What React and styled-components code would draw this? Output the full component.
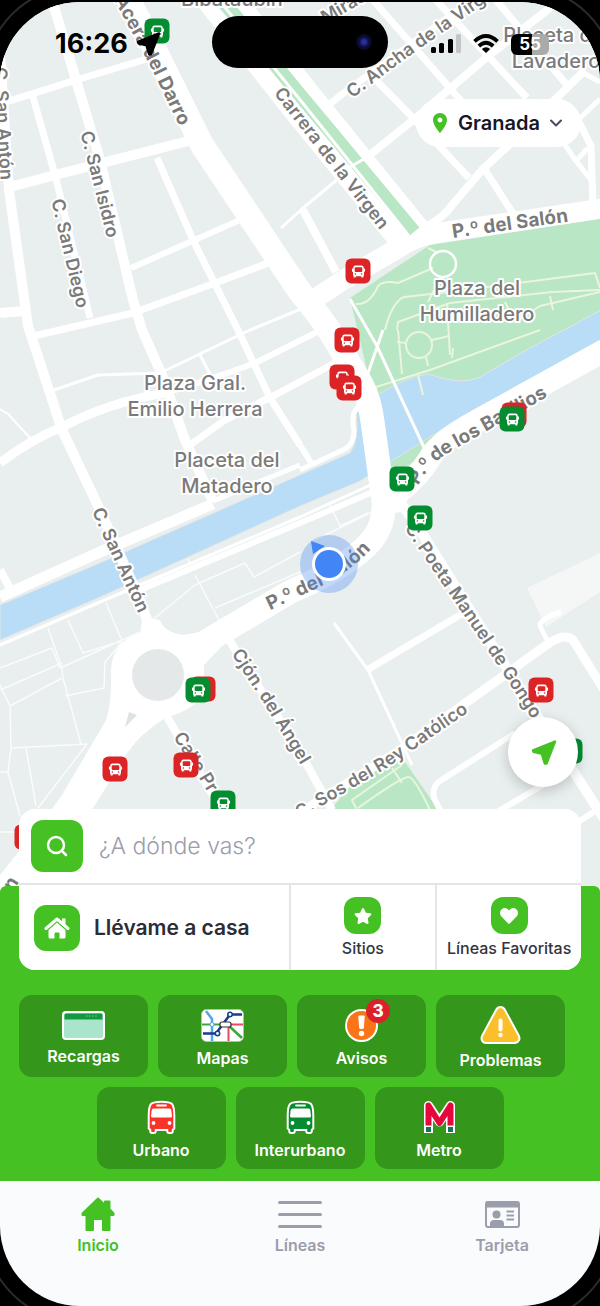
import styled, { createGlobalStyle } from "styled-components"
import { FaHeart, FaStar } from "react-icons/fa"
import { MdLocationOn } from "react-icons/md"
import { ChevronDown, Search } from "lucide-react"


const colors = {
    green: '#45c124',
    tile: '#34961b',
    busGreen: '#048c31',
    busRed: '#dc2325',
    land: '#e9eeee',
    park: '#b9e6c4',
    water: '#b9dcf7',
    label: '#7a7a7a',
    gray: '#9a9dab'
}

const mapWidth = 600
const mapHeight = 890

const roads = [
    // barrio de San Anton
    { w: 10, d: 'M0 55 L9 190 L28 326 L62 430 L100 510 L140 600 L156 645' },
    { w: 10, d: 'M52 0 L76 80 L100 160 L133 300 L142 330 L162 375 L185 440 L213 502' },
    { w: 7, d: 'M33 97 L55 175 L90 318' },
    { w: 7, d: 'M0 104 L76 80 L150 58' },
    { w: 10, d: 'M10 187 L55 175 L200 138' },
    { w: 7, d: 'M157 158 L193 240 L238 330 L270 398 L300 445' },
    { w: 6, d: 'M131 268 L240 220' },
    { w: 7, d: 'M34 336 L133 313 L215 283 L274 261' },
    { w: 10, d: 'M0 313 L24 311' },
    { w: 3, d: 'M54 390 L98 375 L160 373 L250 330 L318 302' },
    { w: 9, d: 'M0 463 Q30 440 62 427 Q110 402 165 393' },
    { w: 6, d: 'M165 393 Q210 380 255 363 L325 328' },
    { w: 7, d: 'M190 445 L225 420 L275 395 L350 355' },
    { w: 3, d: 'M200 355 L210 374' },
    { w: 2, d: 'M0 409 L8 414 L31 439' },
    { w: 8, d: 'M0 570 L12 592' },
    { w: 3, d: 'M281 228 L303 208 L357 163' },
    { w: 8, d: 'M303 210 L336 272' },
    // centro
    { w: 7, d: 'M322 110 L345 92 L478 -4' },
    { w: 8, d: 'M366 158 L417 117 L487 57 L560 0' },
    { w: 7, d: 'M373 0 L462 102' },
    { w: 7, d: 'M372 76 L415 120 L469 178' },
    { w: 7, d: 'M436 0 L527 98' },
    { w: 7, d: 'M496 0 L566 84' },
    { w: 7, d: 'M340 0 L348 12' },
    { w: 8, d: 'M428 226 Q445 216 453 204 L482 170 L512 142 L585 70' },
    { w: 7, d: 'M485 170 L514 215' },
    { w: 7, d: 'M578 120 L591 146 L593 206' },
    { w: 5, d: 'M565 145 L576 161 L588 148 M576 161 L591 180' },
    { w: 5, d: 'M600 99 L580 118 L562 145' },
    { w: 5, d: 'M585 74 L600 82' },
    // riberas del Genil
    { w: 11, d: 'M0 597 L100 552 L213 504' },
    { w: 5, d: 'M213 501 L300 465' },
    { w: 5, d: 'M300 470 L345 449 Q354 444 354 430 Q350 412 360 406' },
    { w: 6, d: 'M300 445 L313 466' },
    { w: 3, d: 'M0 645 L100 602 L300 517 L375 483' },
    { w: 6, d: 'M140 590 L300 523 L375 491' },
    // sur
    { w: 8, d: 'M226 635 L300 752 L332 810' },
    { w: 8, d: 'M166 715 L219 806' },
    { w: 9, d: 'M285 822 L400 750 L545 646 Q564 632 573 640 L604 690' },
    { w: 10, d: 'M395 495 L420 530 L470 610 L540 720 L605 820' },
    { w: 7, d: 'M367 670 L465 612' },
    { w: 3, d: 'M334 623 L368 670 L412 765' },
    { w: 5, d: 'M561 612 Q536 620 541 628 L548 642' },
    { w: 6, d: 'M441 812 L434 798 Q432 786 440 781 L515 733' },
    { w: 6, d: 'M497 812 L555 778 M578 822 L600 808' }
]

const mainRoads = [
    { w: 24, d: 'M124 -8 L150 40 L202 145 L300 292 Q322 318 334 338 L362 385 Q370 400 373 425 L382 490 Q388 520 372 540 Q350 566 290 592 L200 645 L165 660' },
    { w: 20, d: 'M605 208 L438 233 Q415 237 400 247 L345 279 L316 298' },
    { w: 23, d: 'M388 500 Q415 482 430 458 Q438 442 475 422 L605 350' }
]

const lots = [
    'M0 668 L52 648 L60 668 L140 632 M48 628 L62 668 L63 678 L81 744 M68 620 L83 653 L122 641 L106 603 M0 690 L62 663',
    'M62 678 L10 706 L0 685 M10 706 L11 748 L87 744 L38 808 M11 748 L8 772 L20 816 M0 772 L8 772 M26 748 L36 806',
    'M65 696 L104 688 L105 662 L122 642 M140 630 L195 585 L245 563 L254 577 L300 552 M195 575 L220 622 M215 608 L300 572',
    'M330 505 L340 526 L368 513 M0 832 L20 832 M315 540 L372 512 M190 565 L188 558'
]

const parkPaths = [
    'M356 304 Q370 305 378 286 Q384 280 398 283 L433 268 M428 248 L436 252 M418 375 L423 395 M453 348 L452 358 M434 290 L428 302',
    'M385 330 Q392 302 404 297 L440 293 L595 273 L600 288 M397 330 L398 322 L450 303 L552 292 L600 290 M550 296 L553 310',
    'M376 387 L430 370 L540 330 M447 303 L450 355 M398 330 L402 374 M505 302 L515 322 L540 306 L600 292 M397 342 L406 343 M432 340 L449 336 M426 357 L428 366'
]

const streetLabels = [
    { id: 'darro', bold: true, text: 'Acera del Darro', d: 'M120 -4 L155 60 L205 162' },
    { id: 'anton-norte', text: 'C. San Antón', d: 'M1 67 L9 205' },
    { id: 'isidro', text: 'C. San Isidro', d: 'M87 131 L120 260' },
    { id: 'diego', text: 'C. San Diego', d: 'M58 199 L88 325' },
    { id: 'virgen', text: 'Carrera de la Virgen', d: 'M279 89 L402 247' },
    { id: 'ancha', text: 'C. Ancha de la Virgen', d: 'M348 93 L400 54 L520 -30' },
    { id: 'miras', text: 'Miras', d: 'M322 18 L370 -10' },
    { id: 'salon', bold: true, text: 'P.º del Salón', d: 'M452 231 L600 210' },
    { id: 'basilios', bold: true, text: 'P.º de los Basilios', d: 'M412 482 Q424 458 448 445 L580 370' },
    { id: 'salon-sur', bold: true, text: 'P.º del Salón', d: 'M267 604 L322 578 Q352 562 374 535 L385 515' },
    { id: 'anton', text: 'C. San Antón', d: 'M98 508 L124 565 L156 635' },
    { id: 'poeta', text: 'C. Poeta Manuel de Gongo', d: 'M410 524 L440 568 L500 656 L570 765' },
    { id: 'angel', text: 'Cjón. del Ángel', d: 'M237 650 L270 700 L315 775' },
    { id: 'princesa', text: 'Calle Pr', d: 'M179 733 L205 774 L250 850' },
    { id: 'catolico', text: 'C. Sos del Rey Católico', d: 'M296 813 L380 764 L500 682' },
    { id: 'camino', bold: true, text: 'n', d: 'M7 888 L20 868' }
]

const placeLabels = [
    { x: 477, y: 295, lines: ['Plaza del', 'Humilladero'] },
    { x: 195, y: 390, lines: ['Plaza Gral.', 'Emilio Herrera'] },
    { x: 227, y: 467, lines: ['Placeta del', 'Matadero'] },
    { x: 556, y: 42, lines: ['Placeta del', 'Lavadero'] },
    { x: 232, y: 6, lines: ['Bibataubín'] }
]

const stops = [
    { x: 157, y: 31, green: true },
    { x: 358, y: 271 },
    { x: 347, y: 340 },
    { x: 342, y: 377 },
    { x: 349, y: 388 },
    { x: 514, y: 415 },
    { x: 512, y: 419, green: true },
    { x: 402, y: 479, green: true },
    { x: 420, y: 518, green: true },
    { x: 203, y: 689 },
    { x: 198, y: 690, green: true },
    { x: 541, y: 690 },
    { x: 115, y: 769 },
    { x: 186, y: 765 },
    { x: 223, y: 803, green: true },
    { x: 27, y: 837 },
    { x: 570, y: 751, green: true }
]


const StopIcon = () => (
    <svg width="14" height="14" viewBox="0 0 14 14" aria-hidden="true">
        <path fill="white" fillRule="evenodd" d="M4 1h6c1.300 0 2 .7 2.200 2l.1 1h.7c.4 0 .6.3.6.6v2c0 .4-.2.6-.6.6h-.5v3.300c0 .5-.2.8-.6 1v1c0 .4-.3.6-.7.6h-.7c-.4 0-.7-.2-.7-.6v-.8H4.200v.8c0 .4-.3.6-.7.6h-.7c-.4 0-.7-.2-.7-.6v-1c-.4-.2-.6-.5-.6-1V7.200H1c-.4 0-.6-.2-.6-.6v-2c0-.3.2-.6.6-.6h.7l.1-1C2 1.700 2.700 1 4 1zM4.100 2.700c-.6 0-.9.3-.9.9v2.900c0 .6.3.9.9.9h5.800c.6 0 .9-.3.9-.9V3.600c0-.6-.3-.9-.9-.9zM3.900 8.700a.8.8 0 100 1.600.8.8 0 000-1.600zm6.200 0a.8.8 0 100 1.600.8.8 0 000-1.600z" />
    </svg>
)

const ArrowIcon = ({ size, color }) => (
    <svg width={size} height={size} viewBox="0 0 26 26" aria-hidden="true">
        <path d="M24 2.500 L3 11 L3.500 12.300 L11.500 14.300 L14.300 23.500 L15.800 23.500 Z" fill={color} stroke={color} strokeWidth="2.500" strokeLinejoin="round" />
    </svg>
)

const SignalIcon = () => (
    <svg width="30" height="20" viewBox="0 0 30 20" aria-hidden="true">
        <rect x="0" y="13" width="5" height="6" rx="1.500" />
        <rect x="8" y="9" width="5" height="10" rx="1.500" />
        <rect x="17" y="5" width="5" height="14" rx="1.500" />
        <rect x="25" y="0" width="5" height="19" rx="1.500" fill="#c3c6c6" />
    </svg>
)

const WifiIcon = () => (
    <svg width="26" height="20" viewBox="0 0 26 20" fill="none" stroke="black" strokeWidth="3.800" aria-hidden="true">
        <path d="M1.500 7.300 Q13 -3.200 24.500 7.300" />
        <path d="M5.800 12 Q13 5.400 20.200 12" />
        <path d="M13 19 L8.800 15 Q13 11.600 17.200 15 Z" fill="black" stroke="none" />
    </svg>
)

const HouseIcon = () => (
    <svg width="26" height="22" viewBox="0 0 26 22" fill="white" aria-hidden="true">
        <path d="M2 11.500 L13 2 L24 11.500" fill="none" stroke="white" strokeWidth="3" strokeLinecap="round" strokeLinejoin="round" />
        <path d="M18 1.500h3.500v7L18 5.500z" />
        <path d="M13 5.500 L21.500 13v7q0 1.500-1.500 1.500h-4.500v-5q0-1-1-1h-3q-1 0-1 1v5H6q-1.500 0-1.500-1.500v-7z" />
    </svg>
)

const CardIcon = () => (
    <svg width="43" height="29" viewBox="0 0 43 29" aria-hidden="true">
        <rect x="1" y="1" width="41" height="27" rx="3" fill="#a9e5cb" stroke="white" strokeWidth="2" />
        <path d="M2.500 8.500V4q0-1.500 1.500-1.500h35q1.500 0 1.500 1.500v4.500z" fill="#119a41" />
        <path d="M24 5h11" stroke="#5fc184" strokeWidth="1" strokeDasharray="2 1" />
    </svg>
)

const NetworkIcon = () => (
    <svg width="43" height="33" viewBox="0 0 43 33" fill="none" strokeWidth="2" aria-hidden="true">
        <rect x=".5" y=".5" width="42" height="32" rx="5" fill="white" stroke="#b5c0b5" strokeWidth="1" />
        <path d="M5 2 L11 10 V32" stroke="#55a4ec" strokeWidth="2.500" />
        <path d="M1 15.500 H20" stroke="#38a83a" />
        <path d="M28 15.500 H42 M27.500 17 V32" stroke="#e64b62" />
        <path d="M28 17 L41 29" stroke="#38a83a" strokeWidth="2.500" />
        <path d="M2 24.500 H15 L29 5.500 H41" stroke="#153d8c" strokeWidth="2.500" />
        <circle cx="11" cy="15.500" r="2" fill="white" stroke="#55a4ec" strokeWidth="1" />
        <circle cx="16.500" cy="24.500" r="2.200" fill="white" stroke="#153d8c" strokeWidth="1.500" />
        <circle cx="29" cy="5.500" r="2.200" fill="white" stroke="#153d8c" strokeWidth="1.500" />
        <rect x="19" y="13" width="11" height="5" rx="2" fill="white" stroke="#333" strokeWidth="1.200" />
    </svg>
)

const AlertIcon = () => (
    <svg width="33" height="33" viewBox="0 0 33 33" aria-hidden="true">
        <circle cx="16.500" cy="16.500" r="15.500" fill="#fb7417" stroke="white" strokeWidth="2" />
        <path d="M13.300 7.500q0-1 1-1h4.400q1 0 1 1l-.8 11q-.2 1.500-1.400 1.500h-2q-1.200 0-1.400-1.500z" fill="white" />
        <circle cx="16.500" cy="24.500" r="2.700" fill="white" />
    </svg>
)

const WarningIcon = () => (
    <svg width="41" height="38" viewBox="0 0 41 38" aria-hidden="true">
        <path d="M20.500 1q2.800 0 4.200 2.500l14 26q1.300 2.600.4 4.700T35 37H6q-3.200 0-4.100-2.800t.4-4.700l14-26Q17.700 1 20.500 1z" fill="#fbbf2c" stroke="white" strokeWidth="2" />
        <path d="M20.500 14.500v9" stroke="white" strokeWidth="4" strokeLinecap="round" />
        <circle cx="20.500" cy="29" r="2.200" fill="white" />
    </svg>
)

const BusIcon = ({ color }) => (
    <svg width="29" height="34" viewBox="0 0 29 34" aria-hidden="true">
        <path d="M14.500 1.700c5 0 9 .7 10.500 2.300 1.400 1.600 2.300 7 2.300 12v12.500l-1.500 1.300V31q0 2-2 2h-1.600q-2 0-2-2v-1H8.800v1q0 2-2 2H5.200q-2 0-2-2v-1.200l-1.500-1.300V16c0-5 .9-10.400 2.300-12 1.500-1.600 5.500-2.300 10.500-2.300z" fill={color} stroke="white" strokeWidth="2" />
        <path d="M10 5.500h9" stroke="white" strokeWidth="1.800" strokeLinecap="round" />
        <path d="M6.500 8.500h16q1.500 0 1.800 1.500l.7 6q0 1.500-1.500 1.500h-18Q4 17.500 4 16l.7-6q.3-1.500 1.800-1.500z" fill="white" />
        <circle cx="6.500" cy="23" r="1.900" fill="white" />
        <circle cx="22.500" cy="23" r="1.900" fill="white" />
    </svg>
)

const MetroIcon = () => (
    <svg width="33" height="34" viewBox="0 0 33 34" fill="none" strokeLinejoin="round" aria-hidden="true">
        <path d="M5.500 28.500 V5.500 L16.500 22 L27.500 5.500 V28.500" stroke="white" strokeWidth="9" strokeLinecap="square" />
        <path d="M5.500 25.500 V5.500 L16.500 23 L27.500 5.500 V25.500" stroke="#e4093a" strokeWidth="6" />
        <path d="M3 27h5v5H3zM25 27h5v5h-5z" fill="#12774a" />
    </svg>
)

const HomeTabIcon = () => (
    <svg width="34" height="34" viewBox="0 0 34 34" aria-hidden="true">
        <path d="M17 1.500 L24 8 V4.500 H28.500 V12 L32.500 16.500 V18 H28.500 V33 H22 V22 H12 V33 H5.500 V18 H1.500 V16.500 Z" fill={colors.green} stroke={colors.green} strokeWidth="2" strokeLinejoin="round" />
    </svg>
)

const LinesTabIcon = () => (
    <svg width="44" height="34" viewBox="0 0 44 34" stroke={colors.gray} strokeWidth="3" strokeLinecap="round" aria-hidden="true">
        <path d="M1.500 5.500h41M1.500 17.500h41M1.500 29.500h41" />
    </svg>
)

const CardTabIcon = () => (
    <svg width="35" height="34" viewBox="0 0 35 34" fill={colors.gray} aria-hidden="true">
        <rect x="1" y="5" width="33" height="25" rx="2" fill="none" stroke={colors.gray} strokeWidth="2" />
        <path d="M1 4.500h33v6H1z" />
        <circle cx="11.500" cy="17.500" r="4" />
        <path d="M5 29v-2q0-4 4-4h6q4 0 4 4v2z" />
        <path d="M21.500 14.500h7.500M21.500 18.500h7.500M21.500 22.500h7.500" stroke={colors.gray} strokeWidth="1.800" />
    </svg>
)


const actions = [
    { name: 'Recargas', icon: <CardIcon /> },
    { name: 'Mapas', icon: <NetworkIcon /> },
    { name: 'Avisos', icon: <AlertIcon />, badge: 3 },
    { name: 'Problemas', icon: <WarningIcon /> }
]

const transports = [
    { name: 'Urbano', icon: <BusIcon color="#f8342a" /> },
    { name: 'Interurbano', icon: <BusIcon color={colors.busGreen} /> },
    { name: 'Metro', icon: <MetroIcon /> }
]

const tabs = [
    { name: 'Inicio', icon: <HomeTabIcon />, active: true },
    { name: 'Líneas', icon: <LinesTabIcon /> },
    { name: 'Tarjeta', icon: <CardTabIcon /> }
]


const CityMap = () => (
    <MapDrawing viewBox={`0 2 ${mapWidth} ${mapHeight}`} role="img" aria-label="Mapa de Granada">
        <defs>
            {streetLabels.map(({ id, d }) => <path key={id} id={id} d={d} />)}
        </defs>
        <path d="M527 588 L600 553 V592 L546 627 Z" fill="#f5f6f6" />
        <path d="M350 298 L430 245 L605 218 V350 L440 445 L388 478 L374 400 Z" fill={colors.park} />
        <path d="M334 806 L352 783 L402 758 L440 812 H336 Z" fill={colors.park} />
        <path d="M0 605 L100 563 L300 475 L350 453 Q360 440 356 412 L378 395 Q405 377 428 374 Q462 386 480 377 L530 348 L605 308 V340 L473 410 L385 465 L360 481 L300 506 L100 597 L0 640 Z" fill={colors.water} stroke="#e2e5e4" strokeWidth="1" />
        <g fill="none" stroke="white" strokeLinejoin="round">
            {lots.map(d => <path key={d} d={d} strokeWidth="1.500" opacity=".8" />)}
            {parkPaths.map(d => <path key={d} d={d} stroke="#e9f6dc" strokeWidth="2" />)}
            <circle cx="443" cy="264" r="13" strokeWidth="2.500" />
            <circle cx="419" cy="345" r="13" stroke="#e9f6dc" strokeWidth="2" />
            <path d="M350 299 L377 346 L427 454 M383 330 L367 376" strokeWidth="3" />
            <path d="M357 810 L352 800 L402 765 M392 768 L402 783 M358 808 Q400 778 408 777 Q414 776 430 810" stroke="#e9f6dc" strokeWidth="2" />
            {roads.map(({ w, d }) => <path key={d} d={d} strokeWidth={w} />)}
            <path d="M210 -14 L300 100 L412 238" strokeWidth="44" />
            {mainRoads.map(({ w, d }) => <path key={d} d={d} strokeWidth={w} />)}
            <path d="M222 0 L300 95 L414 232" stroke={colors.park} strokeWidth="14" />
            <path d="M219 0 L297 96 L409 236 M350 167 L364 159" strokeWidth="3" />
        </g>
        {/* rotonda y sus accesos */}
        <path d="M142 617 L160 620 Q164 632 183 635 Q205 632 240 620 L228 640 L204 665 V690 Q200 708 165 718 Q140 734 128 752 L93 808 L50 858 L0 905 V875 L40 825 L62 795 L105 722 Q112 705 111 670 Q112 642 141 632 Z" fill="white" />
        <circle cx="158" cy="675" r="26" fill="#e4e8e8" />
        <path d="M129 712 L137 715 L125 727 Z" fill="#dde2e2" />
        <path d="M385 490 L412 490 L402 512 L384 514 Z" fill="white" />
        {streetLabels.map(({ id, text, bold }) =>
            <StreetLabel key={id} $bold={bold} dy="7">
                <textPath href={`#${id}`}>{text}</textPath>
            </StreetLabel>
        )}
        {placeLabels.map(({ x, y, lines }) =>
            <PlaceLabel key={lines[0] + y}>
                {lines.map((line, i) => <tspan key={line} x={x} y={y + i * 26}>{line}</tspan>)}
            </PlaceLabel>
        )}
    </MapDrawing>
)

const Puck = () => (
    <PuckHalo>
        <svg width="58" height="58" viewBox="0 0 58 58" aria-hidden="true">
            <circle cx="29" cy="29" r="29" fill="#4285f4" opacity=".32" />
            <path d="M11 6 L25 11 L13 19 Z" fill="#4285f4" />
            <circle cx="29" cy="29" r="17" fill="white" />
            <circle cx="29" cy="29" r="14" fill="#4285f4" />
        </svg>
    </PuckHalo>
)

const Tile = ({ name, icon, badge }) => (
    <StyledTile type="button">
        <TileIcon>
            {icon}
            {badge && <Badge>{badge}</Badge>}
        </TileIcon>
        {name}
    </StyledTile>
)

export default function App() {
    return (
        <>
            <GlobalStyle />
            <Device>
                <Screen>
                    <MapArea>
                        <CityMap />
                        {stops.map(({ x, y, green }) =>
                            <Stop key={`${x}-${y}`} $x={x} $y={y} $green={green}><StopIcon /></Stop>
                        )}
                        <Puck />
                        <StatusBar>
                            <Clock>16:26 <ArrowIcon size={26} color="black" /></Clock>
                            <Island><Camera /></Island>
                            <Indicators>
                                <SignalIcon />
                                <WifiIcon />
                                <Battery>55</Battery>
                            </Indicators>
                        </StatusBar>
                        <CityButton type="button">
                            <MdLocationOn size={24} color={colors.green} />
                            Granada
                            <ChevronDown size={20} strokeWidth={2.5} color="#4b4f60" />
                        </CityButton>
                        <LocateButton type="button" aria-label="Mi ubicación">
                            <ArrowIcon size={27} color={colors.green} />
                        </LocateButton>
                    </MapArea>

                    <Panel>
                        <SearchCard>
                            <SearchRow>
                                <IconBox $size={52}><Search size={24} strokeWidth={2.5} /></IconBox>
                                <SearchInput type="text" aria-label="Destino" placeholder="¿A dónde vas?" />
                            </SearchRow>
                            <Shortcuts>
                                <HomeShortcut type="button">
                                    <IconBox $size={46}><HouseIcon /></IconBox>
                                    Llévame a casa
                                </HomeShortcut>
                                <Shortcut type="button">
                                    <IconBox $size={37}><FaStar size={18} /></IconBox>
                                    Sitios
                                </Shortcut>
                                <Shortcut type="button">
                                    <IconBox $size={37}><FaHeart size={18} /></IconBox>
                                    Líneas Favoritas
                                </Shortcut>
                            </Shortcuts>
                        </SearchCard>
                        <Tiles>
                            {actions.map(item => <Tile key={item.name} {...item} />)}
                        </Tiles>
                        <Tiles $center>
                            {transports.map(item => <Tile key={item.name} {...item} />)}
                        </Tiles>
                    </Panel>

                    <TabBar>
                        {tabs.map(({ name, icon, active }) =>
                            <Tab key={name} href="#" $active={active}>
                                {icon}
                                {name}
                            </Tab>
                        )}
                    </TabBar>
                </Screen>
            </Device>
        </>
    )
}


const GlobalStyle = createGlobalStyle`
* { box-sizing: border-box; }
body {
    margin: 0;
    background: black;
    font-family: Inter, "Liberation Sans", sans-serif;
}
button, input { font-family: inherit; }
button { border: 0; padding: 0; cursor: pointer; }
svg { display: block; flex: none; }
`

const Device = styled.div`
display: flex;
min-height: 100vh;
padding-top: 2px;
overflow: hidden;
background: black;
`

const Screen = styled.main`
display: flex;
flex-direction: column;
flex: 1;
min-width: 0;
overflow: hidden;
border-radius: 80px;
background: #fafbfd;
box-shadow: 0 0 0 15px black, 0 0 0 17px #2c2c2e;
`

const MapArea = styled.section`
position: relative;
aspect-ratio: ${mapWidth} / ${mapHeight};
background: ${colors.land};
`

const MapDrawing = styled.svg`
width: 100%;
height: 100%;
`

const StreetLabel = styled.text`
fill: ${colors.label};
font-size: ${({ $bold }) => $bold ? 19 : 18}px;
font-weight: ${({ $bold }) => $bold ? 700 : 600};
stroke: white;
stroke-width: 4px;
stroke-linejoin: round;
paint-order: stroke;
`

const PlaceLabel = styled.text`
fill: ${colors.label};
font-size: 20px;
font-weight: 500;
text-anchor: middle;
stroke: white;
stroke-width: 4px;
stroke-linejoin: round;
paint-order: stroke;
`

const Stop = styled.span`
position: absolute;
left: ${({ $x }) => $x / mapWidth * 100}%;
top: ${({ $y }) => ($y - 2) / mapHeight * 100}%;
display: flex;
align-items: center;
justify-content: center;
width: 25px;
height: 25px;
border-radius: 6px;
background: ${({ $green }) => $green ? colors.busGreen : colors.busRed};
transform: translate(-50%, -50%);
`

const PuckHalo = styled.span`
position: absolute;
left: ${329 / mapWidth * 100}%;
top: ${562 / mapHeight * 100}%;
transform: translate(-50%, -50%);
`

const StatusBar = styled.header`
position: absolute;
top: 14px;
left: 0;
right: 0;
display: grid;
grid-template-columns: 1fr auto 1fr;
align-items: center;
`

const Clock = styled.div`
display: flex;
align-items: center;
gap: 7px;
padding: 4px 0 0 55px;
font-size: 27px;
font-weight: 700;
line-height: 28px;
`

const Island = styled.div`
display: flex;
align-items: center;
justify-content: flex-end;
width: 176px;
height: 52px;
padding-right: 16px;
border-radius: 26px;
background: black;
`

const Camera = styled.span`
width: 16px;
height: 16px;
border-radius: 50%;
background: radial-gradient(circle, #2b2f9c 0 15%, #0c0d3c 45%, #080818 75%);
`

const Indicators = styled.div`
display: flex;
align-items: center;
justify-content: flex-end;
gap: 12px;
padding: 4px 51px 0 0;
`

const Battery = styled.span`
width: 38px;
border-radius: 6px;
background: linear-gradient(90deg, black 55%, #a9abab 55%);
color: white;
font-size: 17px;
font-weight: 700;
line-height: 21px;
text-align: center;
`

const CityButton = styled.button`
position: absolute;
top: 97px;
right: 19px;
display: flex;
align-items: center;
gap: 6px;
height: 48px;
padding: 0 15px 0 12px;
border-radius: 24px;
background: white;
color: #15172b;
font-size: 20px;
font-weight: 600;
`

const LocateButton = styled.button`
position: absolute;
right: 22px;
bottom: 105px;
display: flex;
align-items: center;
justify-content: center;
width: 70px;
height: 70px;
border-radius: 50%;
background: white;
box-shadow: 0 4px 14px rgba(0, 0, 0, 0.2);
`

const Panel = styled.section`
position: relative;
display: flex;
flex-direction: column;
gap: 10px;
margin-top: -6px;
padding: 0 19px 12px;
border-radius: 6px 6px 0 0;
background: ${colors.green};
`

const SearchCard = styled.div`
margin: -77px 0 15px;
overflow: hidden;
border-radius: 16px;
background: white;
`

const SearchRow = styled.div`
display: flex;
align-items: center;
gap: 16px;
height: 74px;
padding: 0 12px;
`

const IconBox = styled.span`
display: flex;
align-items: center;
justify-content: center;
flex: none;
width: ${({ $size }) => $size}px;
height: ${({ $size }) => $size}px;
border-radius: 12px;
background: ${colors.green};
color: white;
`

const SearchInput = styled.input`
flex: 1;
min-width: 0;
border: 0;
outline: 0;
padding: 0;
background: transparent;
font-size: 23px;
font-weight: 300;

&::placeholder {
    color: ${colors.gray};
}
`

const Shortcuts = styled.div`
display: grid;
grid-template-columns: 270fr 147fr 146fr;
height: 87px;
border-top: 2px solid #e4e5e7;
`

const HomeShortcut = styled.button`
display: flex;
align-items: center;
gap: 14px;
padding-left: 15px;
background: white;
color: #2b2c36;
font-size: 21px;
font-weight: 600;
white-space: nowrap;
`

const Shortcut = styled.button`
display: flex;
flex-direction: column;
align-items: center;
justify-content: center;
gap: 4px;
border-left: 2px solid #e4e5e7;
background: white;
color: #33343c;
font-size: 16px;
font-weight: 500;
line-height: 20px;
white-space: nowrap;
`

const Tiles = styled.div`
display: flex;
gap: 10px;
justify-content: ${({ $center }) => $center ? 'center' : 'flex-start'};
`

const StyledTile = styled.button`
display: flex;
flex-direction: column;
align-items: center;
justify-content: center;
gap: 6px;
flex: 0 0 calc((100% - 46px) / 4);
height: 82px;
padding-top: 4px;
border-radius: 13px;
background: ${colors.tile};
color: white;
font-size: 16px;
font-weight: 600;
line-height: 20px;
`

const TileIcon = styled.span`
position: relative;
`

const Badge = styled.span`
position: absolute;
top: -10px;
right: -12px;
width: 24px;
border-radius: 50%;
background: #dc2228;
font-size: 17px;
font-weight: 800;
line-height: 24px;
text-align: center;
`

const TabBar = styled.nav`
display: grid;
grid-template-columns: repeat(3, 1fr);
gap: 6px;
flex: 1;
min-height: 125px;
padding-top: 16px;
`

const Tab = styled.a`
display: flex;
flex-direction: column;
align-items: center;
gap: 4px;
color: ${({ $active }) => $active ? colors.green : colors.gray};
font-size: 16px;
font-weight: 600;
line-height: 20px;
text-decoration: none;
`
